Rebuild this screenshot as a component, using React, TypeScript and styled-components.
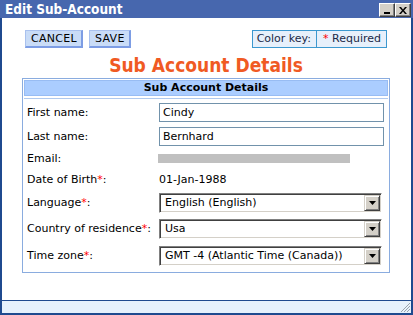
import styled, { createGlobalStyle } from "styled-components";

const GlobalStyle = createGlobalStyle`
  html, body {
    margin: 0;
    padding: 0;
    background: #ffffff;
  }
  body {
    font-family: "DejaVu Sans", Verdana, sans-serif;
    font-size: 11px;
    color: #000000;
  }
`;

type Field = {
  label: string;
  required?: boolean;
  kind: "input" | "text" | "masked" | "select";
  value?: string;
  height: number;
};

const fields: Field[] = [
  { label: "First name", kind: "input", value: "Cindy", height: 24 },
  { label: "Last name", kind: "input", value: "Bernhard", height: 25 },
  { label: "Email", kind: "masked", height: 19 },
  { label: "Date of Birth", required: true, kind: "text", value: "01-Jan-1988", height: 22 },
  { label: "Language", required: true, kind: "select", value: "English (English)", height: 25 },
  { label: "Country of residence", required: true, kind: "select", value: "Usa", height: 27 },
  { label: "Time zone", required: true, kind: "select", value: "GMT -4 (Atlantic Time (Canada))", height: 27 },
];

export default function App() {
  return (
    <>
      <GlobalStyle />
      <Window>
        <TitleBar>
          <Title>Edit Sub-Account</Title>
          <TitleButtons>
            <TitleButton aria-label="minimize">
              <MinGlyph />
            </TitleButton>
            <TitleButton aria-label="close">
              <svg width="8" height="7" viewBox="0 0 8 7">
                <path d="M0 0h2l2 2.5L6 0h2L5 3.5 8 7H6L4 4.5 2 7H0l3-3.5z" fill="#000" />
              </svg>
            </TitleButton>
          </TitleButtons>
        </TitleBar>
        <Frame>
          <Body>
            <Toolbar>
              <ButtonGroup>
                <ActionButton>CANCEL</ActionButton>
                <ActionButton>SAVE</ActionButton>
              </ButtonGroup>
              <ColorKey>
                <KeyCell>Color key:</KeyCell>
                <KeyCell $divider>
                  <Star>*</Star> Required
                </KeyCell>
              </ColorKey>
            </Toolbar>
            <Heading>Sub Account Details</Heading>
            <Fieldset>
              <SectionHeader>Sub Account Details</SectionHeader>
              <Divider />
              <Form>
                {fields.map((f) => (
                  <Row key={f.label} $h={f.height}>
                    <Label>
                      {f.label}
                      {f.required && <Star>*</Star>}:
                    </Label>
                    {f.kind === "input" && <TextInput readOnly value={f.value} />}
                    {f.kind === "text" && <Value>{f.value}</Value>}
                    {f.kind === "masked" && <Masked />}
                    {f.kind === "select" && (
                      <Select>
                        <SelectText>{f.value}</SelectText>
                        <DropButton>
                          <svg width="7" height="4" viewBox="0 0 7 4">
                            <path d="M0 0h7L3.5 4z" fill="#000" />
                          </svg>
                        </DropButton>
                      </Select>
                    )}
                  </Row>
                ))}
              </Form>
            </Fieldset>
          </Body>
          <StatusBar>
            <svg width="11" height="11" viewBox="0 0 11 11">
              <path d="M10 1L1 10M10 4L4 10M10 7L7 10" stroke="#9aa3ad" strokeWidth="1" />
            </svg>
          </StatusBar>
        </Frame>
      </Window>
    </>
  );
}

const Window = styled.div`
  width: 413px;
  height: 315px;
  display: flex;
  flex-direction: column;
  background: #ffffff;
`;

const TitleBar = styled.div`
  height: 18px;
  flex: none;
  background: #4767ae;
  display: flex;
  align-items: center;
  justify-content: space-between;
  padding: 0 2px 0 5px;
`;

const Title = styled.span`
  color: #ffffff;
  font-family: "DejaVu Sans Condensed", "DejaVu Sans", Verdana, sans-serif;
  font-stretch: condensed;
  font-weight: bold;
  font-size: 13.5px;
  line-height: 18px;
`;

const TitleButtons = styled.div`
  display: flex;
  align-self: flex-start;
  margin-top: 3px;
`;

const TitleButton = styled.div`
  width: 16px;
  height: 14px;
  box-sizing: border-box;
  background: #d4d0c8;
  border: 1px solid;
  border-color: #ffffff #404040 #404040 #ffffff;
  box-shadow: inset -1px -1px #808080;
  display: flex;
  align-items: center;
  justify-content: center;
`;

const MinGlyph = styled.div`
  width: 6px;
  height: 2px;
  background: #000;
  margin-top: 6px;
`;

const Frame = styled.div`
  flex: 1;
  display: flex;
  flex-direction: column;
  border: 2px solid #1f4a8f;
  border-top: none;
`;

const Body = styled.div`
  flex: 1;
  padding: 12px 21px 0 20px;
`;

const Toolbar = styled.div`
  display: flex;
  justify-content: space-between;
  align-items: center;
  padding: 0 3px;
`;

const ButtonGroup = styled.div`
  display: flex;
  gap: 6px;
`;

const ActionButton = styled.div`
  height: 18px;
  box-sizing: border-box;
  padding: 0 4px 0 5px;
  background: #c9dcf7;
  border: 1px solid #a9c1ee;
  border-right: 2px solid #7d9de4;
  border-bottom: 2px solid #7d9de4;
  line-height: 16px;
  letter-spacing: 0.3px;
  color: #000;
`;

const ColorKey = styled.div`
  display: flex;
  height: 18px;
  box-sizing: border-box;
  border: 1px solid #3c98cf;
  background: #e7f0fb;
  color: #1b2a48;
`;

const KeyCell = styled.div<{ $divider?: boolean }>`
  padding: 0 5px 0 4px;
  line-height: 16px;
  border-left: ${({ $divider }) => ($divider ? "1px solid #3c98cf" : "none")};
  padding-left: ${({ $divider }) => ($divider ? "6px" : "4px")};
`;

const Star = styled.span`
  color: #ff0000;
`;

const Heading = styled.h1`
  margin: 6px 0 2px;
  text-align: center;
  font-family: "DejaVu Sans Condensed", "DejaVu Sans", Verdana, sans-serif;
  font-stretch: condensed;
  font-weight: bold;
  font-size: 19px;
  line-height: 22px;
  color: #f05a23;
`;

const Fieldset = styled.div`
  border: 1px solid #8aacdf;
  padding: 1px 1px 3px;
`;

const SectionHeader = styled.div`
  height: 16px;
  box-sizing: border-box;
  background: #abcdff;
  border: 1px solid #98bcf3;
  font-weight: bold;
  text-align: center;
  line-height: 14px;
`;

const Divider = styled.div`
  height: 1px;
  margin-top: 2px;
  background: #b0c9ee;
`;

const Form = styled.div`
  margin-top: 1px;
  padding-left: 3px;
  display: flex;
  flex-direction: column;
`;

const Row = styled.div<{ $h: number }>`
  height: ${({ $h }) => $h}px;
  display: grid;
  grid-template-columns: 132px 1fr;
  align-items: center;
`;

const Label = styled.div`
  white-space: nowrap;
`;

const TextInput = styled.input`
  width: 225px;
  height: 19px;
  box-sizing: border-box;
  margin: 0;
  padding: 0 0 0 3px;
  border: 1px solid #7192ab;
  background: #fff;
  font-family: "DejaVu Sans", Verdana, sans-serif;
  font-size: 11px;
  color: #000;
  outline: none;
`;

const Value = styled.div``;

const Masked = styled.div`
  width: 192px;
  height: 9px;
  margin-left: -1px;
  background: #c0c0c0;
`;

const Select = styled.div`
  width: 223px;
  height: 20px;
  box-sizing: border-box;
  border: 1px solid;
  border-color: #808080 #ffffff #ffffff #808080;
  box-shadow: inset 1px 1px #404040, inset -1px -1px #d4d0c8;
  background: #fff;
  display: flex;
  align-items: center;
  padding: 1px;
`;

const SelectText = styled.div`
  flex: 1;
  padding-left: 4px;
  white-space: nowrap;
  overflow: hidden;
`;

const DropButton = styled.div`
  width: 16px;
  height: 16px;
  box-sizing: border-box;
  background: #d4d0c8;
  border: 1px solid;
  border-color: #d4d0c8 #404040 #404040 #d4d0c8;
  box-shadow: inset 1px 1px #ffffff, inset -1px -1px #808080;
  display: flex;
  align-items: center;
  justify-content: center;
`;

const StatusBar = styled.div`
  height: 12px;
  flex: none;
  border-top: 1px solid #1f4a8f;
  background: #e6f1fc;
  display: flex;
  justify-content: flex-end;
  align-items: flex-end;
  overflow: hidden;
`;
